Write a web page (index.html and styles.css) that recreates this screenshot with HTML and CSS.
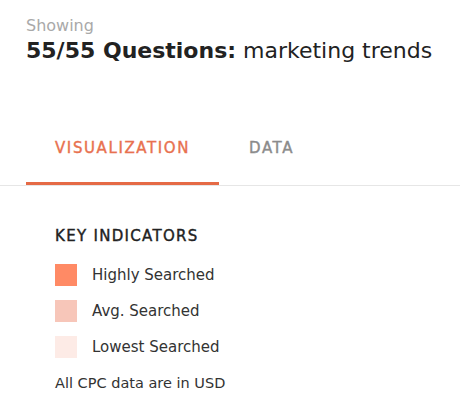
FILE: index.html
```html
<!DOCTYPE html>
<html>
<head>
<meta charset="utf-8">
<link rel="stylesheet" href="styles.css">
</head>
<body>
<div class="page">
  <header class="head">
    <div class="showing">Showing</div>
    <h1 class="title"><strong>55/55 Questions:</strong> marketing trends</h1>
  </header>
  <nav class="tabs">
    <div class="tab active">VISUALIZATION</div>
    <div class="tab">DATA</div>
  </nav>
  <section class="key">
    <h2 class="key-title">KEY INDICATORS</h2>
    <ul class="legend">
      <li class="item"><span class="sw sw-high"></span>Highly Searched</li>
      <li class="item"><span class="sw sw-avg"></span>Avg. Searched</li>
      <li class="item"><span class="sw sw-low"></span>Lowest Searched</li>
    </ul>
    <p class="note">All CPC data are in USD</p>
  </section>
</div>
</body>
</html>
```
FILE: styles.css
```css
* { box-sizing: border-box; }
html, body { margin: 0; padding: 0; background: #fff; }
body { font-family: "DejaVu Sans", "Open Sans", sans-serif; color: #222; }
.page { width: 460px; height: 415px; overflow: hidden; }
.head { padding: 16px 26px 0; }
.showing { font-size: 16px; color: #a9a9a9; line-height: 20px; }
.title { margin: 1px 0 0; font-size: 22px; font-weight: 400; line-height: 28px; color: #222; white-space: nowrap; }
.title strong { font-weight: 700; }
.tabs { display: flex; margin-top: 65px; border-bottom: 1px solid #e6e6e6; padding-left: 26px; }
.tab { font-size: 15px; font-weight: 400; letter-spacing: 1.6px; color: #8b8b8b; height: 55px; line-height: 20px; padding-top: 8px; white-space: nowrap; -webkit-text-stroke: 0.4px currentColor; }
.tab.active { color: #e8714f; width: 193px; padding-left: 29px; border-bottom: 3px solid #e56a45; }
.tab + .tab { padding-left: 30px; }
.key { padding: 40px 0 0 55px; }
.key-title { margin: 0; font-size: 15px; font-weight: 400; letter-spacing: 1.3px; color: #222; line-height: 20px; -webkit-text-stroke: 0.4px currentColor; }
.legend { list-style: none; margin: 18px 0 0; padding: 0; display: flex; flex-direction: column; gap: 14px; }
.item { display: flex; align-items: center; height: 22px; font-size: 15px; color: #333; }
.sw { width: 22px; height: 22px; margin-right: 15px; flex: none; }
.sw-high { background: #ff8a65; }
.sw-avg { background: #f7c6b9; }
.sw-low { background: #fdebe6; }
.note { margin: 15px 0 0; font-size: 14.5px; color: #333; line-height: 20px; }
```
